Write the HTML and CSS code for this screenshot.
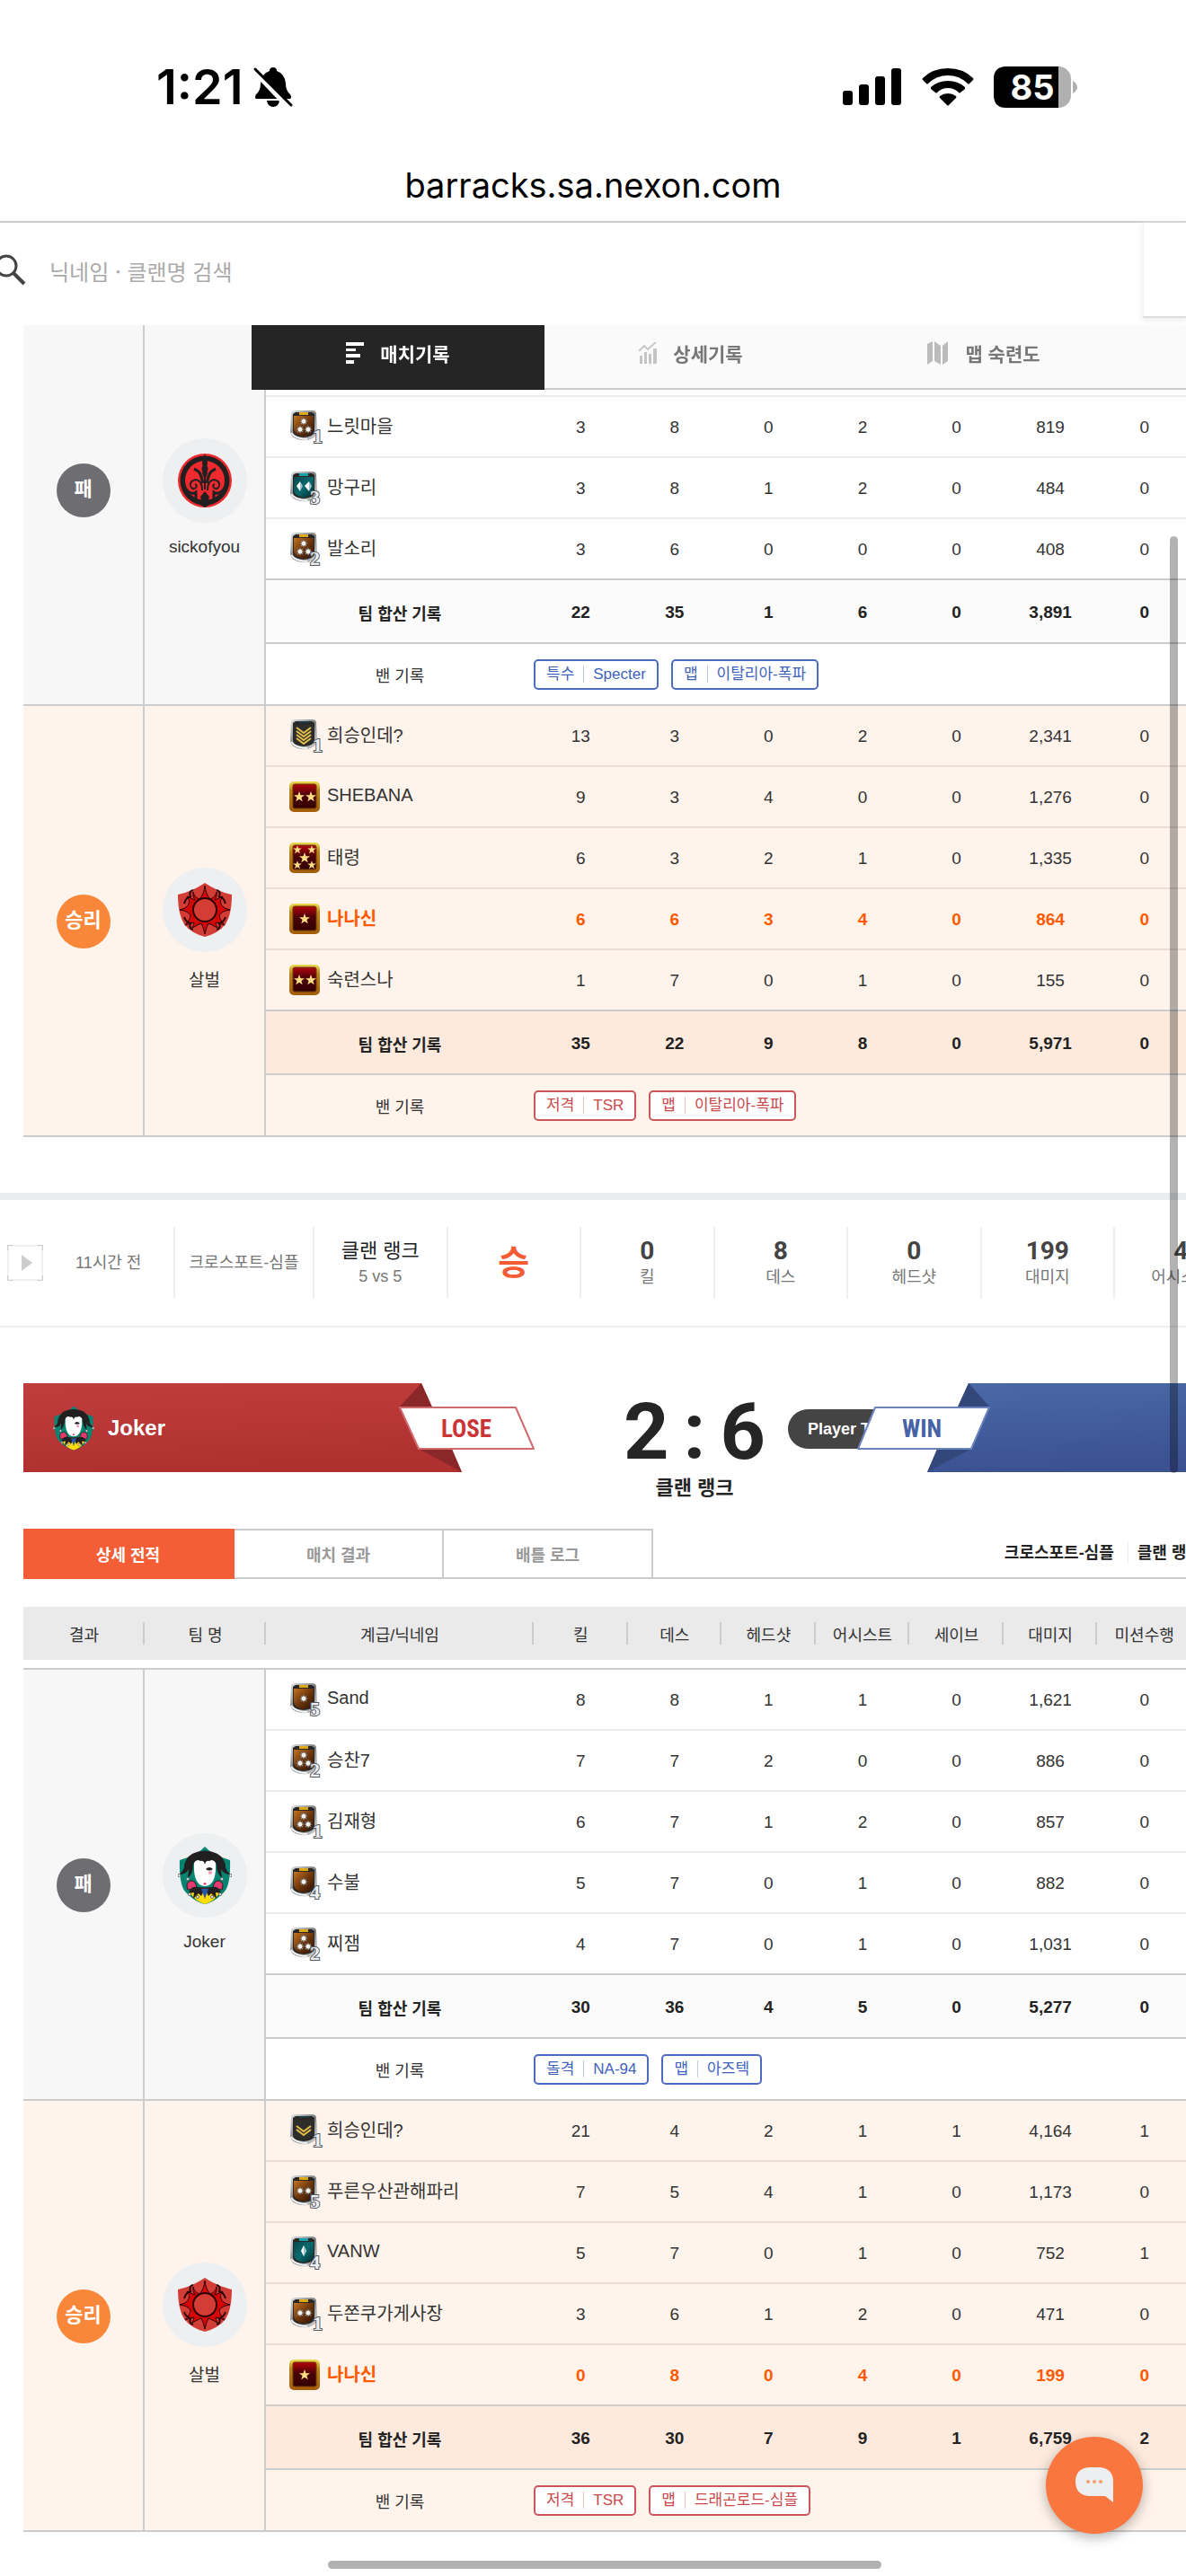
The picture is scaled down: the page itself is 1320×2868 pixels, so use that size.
FILE: index.html
```html
<!DOCTYPE html>
<html lang="ko">
<head>
  <meta charset="UTF-8">
  <meta name="viewport" content="width=device-width">
  <title>barracks.sa.nexon.com</title>
  <link rel="stylesheet" href="styles.css">
</head>
<body>
  <!-- shared icons -->
  <svg class="defs" width="0" height="0" aria-hidden="true">
    <defs>
      <linearGradient id="g-brown" x1="0" y1="0" x2="1" y2="1"><stop offset="0" stop-color="#c47420"/><stop offset=".5" stop-color="#6e360c"/><stop offset="1" stop-color="#2c1003"/></linearGradient>
      <linearGradient id="g-teal" x1="0" y1="0" x2="1" y2="1"><stop offset="0" stop-color="#07484c"/><stop offset=".5" stop-color="#0b6b6e"/><stop offset="1" stop-color="#032c30"/></linearGradient>
      <linearGradient id="g-metal" x1="0" y1="0" x2="1" y2="1"><stop offset="0" stop-color="#e2e4e6"/><stop offset=".5" stop-color="#7a7f82"/><stop offset="1" stop-color="#d8dcde"/></linearGradient>
      <linearGradient id="g-gold" x1="0" y1="0" x2="0" y2="1"><stop offset="0" stop-color="#efdc52"/><stop offset=".3" stop-color="#b98320"/><stop offset="1" stop-color="#a35c08"/></linearGradient>
      <linearGradient id="g-red" x1="0" y1="0" x2="0" y2="1"><stop offset="0" stop-color="#b4040c"/><stop offset=".45" stop-color="#4a0206"/><stop offset="1" stop-color="#340104"/></linearGradient>
      <linearGradient id="g-ribred" x1="0" y1="0" x2=".2" y2="1"><stop offset="0" stop-color="#c03d3d"/><stop offset="1" stop-color="#b03030"/></linearGradient>
      <linearGradient id="g-ribblue" x1="0" y1="0" x2=".2" y2="1"><stop offset="0" stop-color="#4a69a7"/><stop offset="1" stop-color="#3b5192"/></linearGradient>
      <path id="star" d="M0-6 1.500-1.800 6-1.800 2.400 1 3.700 5.200 0 2.700-3.700 5.200-2.400 1-6-1.800-1.500-1.800Z"/>
      <path id="burst" d="M0-4.500 1-2 3.200-3.200 2.200-.8 4.500 0 2.200.9 3.400 3.600 1 2.200 0 4.600-1 2.200-3.400 3.600-2.200.9-4.500 0-2.200-.8-3.200-3.200-1-2Z" fill="#f1f1ee" stroke="#4f4a44" stroke-width=".5"/>
      <g id="frame">
        <path d="M2 3Q3 0 7 0H25Q29 0 30 3L31 25Q29 31 21 33Q15 34 9 32Q3 30 1 25Z" fill="url(#g-metal)"/>
        <path d="M4 4 7 2H25L28 4V23Q28 29 16 30Q4 29 4 23Z" fill="#2b2724"/>
        <path d="M2 25Q7 32 20 32" fill="none" stroke="#f2f4f5" stroke-width="2"/>
      </g>
      <g id="brown"><use href="#frame"/><path d="M5 6H27V21Q26 27 16 29Q6 27 5 21Z" fill="url(#g-brown)"/><path d="M11 2H21V5H11Z" fill="#dda814"/></g>
      <g id="teal"><use href="#frame"/><path d="M5 6H27V21Q26 27 16 29Q6 27 5 21Z" fill="url(#g-teal)"/><path d="M11 2H21V5H11Z" fill="#12a3ab"/></g>
      <g id="black"><use href="#frame"/><path d="M5 6H27V21Q26 27 16 29Q6 27 5 21Z" fill="#2d2d2c"/><path d="M11 2H21V4H11Z" fill="#1b3c44"/></g>
      <symbol id="r-b1" viewBox="0 0 36 38"><use href="#brown"/><use href="#burst" x="16" y="17"/></symbol>
      <symbol id="r-b2" viewBox="0 0 36 38"><use href="#brown"/><use href="#burst" x="12" y="17"/><use href="#burst" x="21" y="17"/></symbol>
      <symbol id="r-b3" viewBox="0 0 36 38"><use href="#brown"/><use href="#burst" x="16" y="12"/><use href="#burst" x="12" y="21"/><use href="#burst" x="21" y="21"/></symbol>
      <symbol id="r-t1" viewBox="0 0 36 38"><use href="#teal"/><path d="M16 10 19 16 16 22 13 16Z" fill="#fff"/><path d="M16 10 19 16 16 22Z" fill="#9fc3cb"/></symbol>
      <symbol id="r-t2" viewBox="0 0 36 38"><use href="#teal"/><path d="M12 11V22L8 16ZM22 11V22L17 16Z" fill="#fff"/><path d="M12 11 15 16 12 22ZM22 11 25 16 22 22Z" fill="#9fc3cb"/></symbol>
      <symbol id="r-k2" viewBox="0 0 36 38"><use href="#black"/><path d="M8 13 16 19 24 13M8 17 16 23 24 17" fill="none" stroke="#e5c04a" stroke-width="2"/></symbol>
      <symbol id="r-k3" viewBox="0 0 36 38"><use href="#black"/><path d="M8 9 16 15 24 9M8 13 16 19 24 13M8 17 16 23 24 17M8 21 16 27 24 21" fill="none" stroke="#e5c04a" stroke-width="2"/></symbol>
      <g id="plate"><rect x="0" y="1" width="34" height="34" rx="5" fill="url(#g-gold)"/><rect x="4" y="4" width="26" height="27" rx="2" fill="url(#g-red)" stroke="#6b3a06"/></g>
      <symbol id="r-s1" viewBox="0 0 36 38"><use href="#plate"/><use href="#star" x="17" y="18" fill="#ffdf84"/></symbol>
      <symbol id="r-s2" viewBox="0 0 36 38"><use href="#plate"/><use href="#star" x="11" y="18" fill="#ffdf84"/><use href="#star" x="24" y="18" fill="#ffdf84"/></symbol>
      <symbol id="r-s5" viewBox="0 0 36 38"><use href="#plate"/><g fill="#ffdf84"><use href="#star" transform="translate(9 9) scale(.8)"/><use href="#star" transform="translate(25 9) scale(.8)"/><use href="#star" transform="translate(9 26) scale(.8)"/><use href="#star" transform="translate(25 26) scale(.8)"/><use href="#star" x="17" y="18"/></g></symbol>
      <symbol id="logo-sick" viewBox="0 0 60 60">
        <circle cx="30" cy="30" r="30" fill="#ee2a2e"/><circle cx="30" cy="30" r="27.500" fill="#221f20"/><circle cx="30" cy="30" r="22" fill="#ee2a2e"/>
        <path d="M30 0 33 10 32 18 33 22 31 27V40H29V27L27 22 28 18 27 10ZM30 42 35 48 34 52 37 56 30 60 23 56 26 52 25 48Z" fill="#221f20"/>
        <path d="M18 17Q25 20 26 26L28 33M42 17Q35 20 34 26L32 33" fill="none" stroke="#221f20" stroke-width="3"/>
        <path d="M27 41Q27 30 20 29 13 30 14 36 16 41 20 38 22 35 19 34M33 41Q33 30 40 29 47 30 46 36 44 41 40 38 38 35 41 34" fill="none" stroke="#221f20" stroke-width="2"/>
        <path d="M8 38Q14 47 20 43L20 50M52 38Q46 47 40 43L40 50" fill="none" stroke="#221f20" stroke-width="3"/>
        <circle cx="30" cy="17" r="3.500" fill="#221f20"/>
      </symbol>
      <symbol id="logo-sun" viewBox="0 0 60 60">
        <path d="M30 0Q45 10 60 13Q60 35 53 46Q45 56 30 60Q15 56 7 46Q0 35 0 13Q15 10 30 0Z" fill="#d43c36"/>
        <g fill="#d50608" stroke="#2b0504" stroke-width="1">
          <path d="M30 3Q31 13 36 18Q42 16 43 10Q44 15 41 19L50 15Q46 19 48 24Q51 29 58 30Q49 31 46 36Q46 40 52 47Q46 45 42 44Q42 46 44 50Q37 46 34 45Q32 48 30 57Q28 48 26 45Q23 46 16 50Q18 46 18 44Q14 45 8 47Q14 40 14 36Q11 31 2 30Q9 29 12 24Q14 19 10 15L19 19Q16 15 17 10Q18 16 24 18Q29 13 30 3Z"/>
          <path d="M7 23Q9 16 14 15Q12 9 17 8M53 23Q51 16 46 15Q48 9 43 8M7 38Q9 44 14 45Q12 51 17 52M53 38Q51 44 46 45Q48 51 43 52" fill="none" stroke-width="2"/>
        </g>
        <circle cx="30" cy="30" r="13" fill="#d43c36" stroke="#2b0504" stroke-width="2"/>
      </symbol>
      <symbol id="logo-joker" viewBox="0 0 60 64">
        <path d="M30 0Q38 9 58 15Q59 45 50 52Q40 62 30 64Q20 62 10 52Q1 45 2 15Q22 9 30 0Z" fill="#058471"/>
        <path d="M13 50Q22 44 30 47Q38 44 47 50Q41 61 30 64Q19 61 13 50Z" fill="#ffdc05"/>
        <path d="M11 48Q8 40 14 38Q20 37 21 46L30 46 39 46Q40 37 46 38Q52 40 49 48L42 47H18Z" fill="#e4396c" stroke="#221f20"/>
        <path d="M12 52Q14 43 22 45L30 47 38 45Q46 43 48 52L42 51 43 58 37 52 34 55 30 47 26 55 23 52 17 58 18 51Z" fill="#221f20"/>
        <path d="M26 47H34L30 58Z" fill="#2955a5"/>
        <path d="M18 18Q18 14 30 15Q42 14 42 18Q43 36 36 42Q30 46 24 42Q17 36 18 18Z" fill="#fff"/>
        <path d="M1 31Q8 26 7 20Q11 8 21 6Q30 3 39 6Q49 8 53 20Q52 26 59 31Q51 31 48 25L49 35Q43 30 43 20Q40 13 35 16Q31 15 30 20Q29 15 25 16Q20 13 17 20Q17 30 11 35L12 25Q9 31 1 31Z" fill="#221f20"/>
        <path d="M31 25Q35 21 39 25Q35 28 31 25Z" fill="#221f20"/><circle cx="36" cy="29" r="2" fill="#f69bb5"/><path d="M28 41 30 40 32 41 30 43Z" fill="#e4396c"/>
        <g fill="#fff" stroke="#666"><circle cx="1.500" cy="32" r="1.500"/><circle cx="58.500" cy="32" r="1.500"/><circle cx="11" cy="36" r="1.500"/><circle cx="49" cy="36" r="1.500"/><circle cx="13" cy="53" r="1.500"/><circle cx="47" cy="53" r="1.500"/><circle cx="22" cy="56" r="1.500"/><circle cx="38" cy="56" r="1.500"/></g>
      </symbol>
    </defs>
  </svg>

  <header class="top">
    <div class="status-bar">
      <div class="status-left">
        <span class="clock">1:21</span>
        <svg width="46" height="46" viewBox="0 0 46 46">
          <path d="M23 1Q27 1 27 5Q36 8 37 19Q37 27 42 31Q44 35 42 36H4Q2 35 4 31Q9 27 9 19Q10 8 19 5Q19 1 23 1Z"/>
          <path d="M16 38H30Q29 45 23 45Q17 45 16 38Z"/>
          <path d="M1 4 40 45" stroke="#fff" stroke-width="6"/>
          <path d="M3 3 43 43" stroke="#000" stroke-width="3" stroke-linecap="round"/>
        </svg>
      </div>
      <div class="status-right">
        <svg width="66" height="42" viewBox="0 0 66 42"><rect x="0" y="25" width="11" height="16" rx="3"/><rect x="18" y="18" width="11" height="23" rx="3"/><rect x="36" y="9" width="11" height="32" rx="3"/><rect x="54" y="0" width="11" height="41" rx="3"/></svg>
        <svg width="58" height="42" viewBox="0 0 58 42"><path d="M29 0Q46 0 57 11Q58 12 57 13L53 17Q52 18 51 17Q42 8 29 8Q16 8 7 17Q6 18 5 17L1 13Q0 12 1 11Q12 0 29 0Z"/><path d="M29 14Q40 14 48 21Q48 22 48 23L43 27Q42 28 41 27Q36 22 29 22Q22 22 17 27Q16 28 15 27L10 23Q10 22 10 21Q18 14 29 14Z"/><path d="M29 28Q34 28 38 31Q39 32 38 33L30 41Q29 42 28 41L20 33Q19 32 20 31Q24 28 29 28Z"/></svg>
        <svg width="94" height="46" viewBox="0 0 94 46"><rect x="0" y="0" width="86" height="46" rx="14" fill="#b0b0b0"/><path d="M14 0H72V46H14Q0 46 0 32V14Q0 0 14 0Z"/><path d="M88 16Q93 19 93 23Q93 27 88 30Z" fill="#b0b0b0"/><text x="43" y="37" class="battery-num">85</text></svg>
      </div>
    </div>
    <div class="address">barracks.sa.nexon.com</div>
    <div class="search-row">
      <div class="search">
        <svg width="36" height="36" viewBox="0 0 36 36"><circle cx="14" cy="13" r="11" fill="none" stroke="#444" stroke-width="3"/><path d="M22 21 34 33" stroke="#444" stroke-width="4"/></svg>
        <input type="text" class="search-input" placeholder="닉네임 · 클랜명 검색" aria-label="닉네임 · 클랜명 검색">
      </div>
      <div class="search-side"></div>
    </div>
    <nav class="main-tabs">
      <a href="#" class="on"><svg width="20" height="24" viewBox="0 0 20 24"><path d="M0 0H20V4H0ZM0 7H11V10H0ZM0 13H16V17H0ZM0 20H9V24H0Z" fill="#fff"/></svg>매치기록</a>
      <a href="#"><svg width="20" height="24" viewBox="0 0 20 24"><path d="M1 24V15H4V24ZM6 24V11H9V24ZM11 24V13H14V24ZM16 24V7H20V24Z" fill="#c4c4c4"/><path d="M0 10 6 4 10 8 19 0" fill="none" stroke="#c8c8c8" stroke-width="2"/></svg>상세기록</a>
      <a href="#"><svg width="24" height="26" viewBox="0 0 24 26"><path d="M0 3 6 0V22L0 26ZM8 0 15 5V26L8 22ZM17 5 23 0V22L17 26Z" fill="#bbb"/></svg>맵 숙련도</a>
      <span class="tabs-rest"></span>
    </nav>
  </header>

  <main>
    <table class="record">
      <colgroup><col class="c-result"><col class="c-team"><col class="c-nick"><col span="7"></colgroup>
      <tbody class="lose">
        <tr class="scrolled"><td rowspan="6" class="side"><span class="badge">패</span></td><td rowspan="6" class="side team"><span class="logo"><svg width="60" height="60"><use href="#logo-sick"/></svg></span>sickofyou</td><td colspan="8"></td></tr>
        <tr><td class="nick"><div><svg class="rank"><use href="#r-b3"/><text x="26" y="36">1</text></svg>느릿마을</div></td><td>3</td><td>8</td><td>0</td><td>2</td><td>0</td><td>819</td><td>0</td></tr>
        <tr><td class="nick"><div><svg class="rank"><use href="#r-t2"/><text x="23" y="36">3</text></svg>망구리</div></td><td>3</td><td>8</td><td>1</td><td>2</td><td>0</td><td>484</td><td>0</td></tr>
        <tr><td class="nick"><div><svg class="rank"><use href="#r-b3"/><text x="23" y="36">2</text></svg>발소리</div></td><td>3</td><td>6</td><td>0</td><td>0</td><td>0</td><td>408</td><td>0</td></tr>
        <tr class="total"><td>팀 합산 기록</td><td>22</td><td>35</td><td>1</td><td>6</td><td>0</td><td>3,891</td><td>0</td></tr>
        <tr class="ban"><td>밴 기록</td><td colspan="7"><div><span class="pill"><b>특수</b>Specter</span><span class="pill"><b>맵</b>이탈리아-폭파</span></div></td></tr>
      </tbody>
      <tbody class="win">
        <tr><td rowspan="7" class="side"><span class="badge">승리</span></td><td rowspan="7" class="side team"><span class="logo"><svg width="60" height="60"><use href="#logo-sun"/></svg></span>살벌</td><td class="nick"><div><svg class="rank"><use href="#r-k3"/><text x="26" y="36">1</text></svg>희승인데?</div></td><td>13</td><td>3</td><td>0</td><td>2</td><td>0</td><td>2,341</td><td>0</td></tr>
        <tr><td class="nick"><div><svg class="rank"><use href="#r-s2"/></svg>SHEBANA</div></td><td>9</td><td>3</td><td>4</td><td>0</td><td>0</td><td>1,276</td><td>0</td></tr>
        <tr><td class="nick"><div><svg class="rank"><use href="#r-s5"/></svg>태령</div></td><td>6</td><td>3</td><td>2</td><td>1</td><td>0</td><td>1,335</td><td>0</td></tr>
        <tr class="me"><td class="nick"><div><svg class="rank"><use href="#r-s1"/></svg>나나신</div></td><td>6</td><td>6</td><td>3</td><td>4</td><td>0</td><td>864</td><td>0</td></tr>
        <tr><td class="nick"><div><svg class="rank"><use href="#r-s2"/></svg>숙련스나</div></td><td>1</td><td>7</td><td>0</td><td>1</td><td>0</td><td>155</td><td>0</td></tr>
        <tr class="total"><td>팀 합산 기록</td><td>35</td><td>22</td><td>9</td><td>8</td><td>0</td><td>5,971</td><td>0</td></tr>
        <tr class="ban"><td>밴 기록</td><td colspan="7"><div><span class="pill"><b>저격</b>TSR</span><span class="pill"><b>맵</b>이탈리아-폭파</span></div></td></tr>
      </tbody>
    </table>

    <section class="summary">
      <div class="when"><button type="button" class="play" aria-label="재생"><svg width="40" height="40" viewBox="0 0 40 40"><rect x="1" y="1" width="38" height="38" fill="none" stroke="#f0f0f0" stroke-width="2"/><path d="M0 6V0H6M34 0H40V6M40 34V40H34M6 40H0V34" fill="none" stroke="#ccc" stroke-width="2"/><path d="M16 11 28 20 16 29Z" fill="#ccc"/></svg></button><span>11시간 전</span></div>
      <div class="small">크로스포트-심플</div>
      <div><strong class="type">클랜 랭크</strong><span>5 vs 5</span></div>
      <div class="result">승</div>
      <div><strong>0</strong><span>킬</span></div>
      <div><strong>8</strong><span>데스</span></div>
      <div><strong>0</strong><span>헤드샷</span></div>
      <div><strong>199</strong><span>대미지</span></div>
      <div><strong>4</strong><span>어시스트</span></div>
    </section>

    <section class="match">
      <div class="ribbon left">
        <svg class="ribbon-bg" width="570" height="99" viewBox="0 0 570 99">
          <path d="M0 0H443L488 99H0Z" fill="url(#g-ribred)"/>
          <path d="M443 0 455 27H418ZM440 73H477L488 99Z" fill="#8a2728"/>
          <path d="M419 27H548L568 73H440Z" fill="#fff" stroke="#cf6a6e" stroke-width="2" stroke-linejoin="round"/>
          <text x="493" y="60" class="flag" fill="#cb3538">LOSE</text>
        </svg>
        <svg class="ribbon-logo" width="46" height="50"><use href="#logo-joker"/></svg>
        <span class="ribbon-name">Joker</span>
      </div>
      <div class="score">
        <div class="score-num"><span>2</span><span>:</span><span>6</span></div>
        <div class="score-label">클랜 랭크</div>
      </div>
      <div class="tag">Player T</div>
      <div class="ribbon right">
        <svg class="ribbon-bg" width="500" height="99" viewBox="0 0 500 99">
          <path d="M124 0H500V99H78Z" fill="url(#g-ribblue)"/>
          <path d="M124 0 148 27H112ZM89 73H127L78 99Z" fill="#34477a"/>
          <path d="M20 27H147L127 73H1Z" fill="#fff" stroke="#6b82bd" stroke-width="2" stroke-linejoin="round"/>
          <text x="72" y="60" class="flag" fill="#4763a8">WIN</text>
        </svg>
      </div>
    </section>

    <div class="sub-tabs">
      <button type="button" class="on">상세 전적</button>
      <button type="button">매치 결과</button>
      <button type="button">배틀 로그</button>
      <p class="info"><span>크로스포트-심플</span><span>클랜 랭크</span></p>
    </div>

    <table class="record">
      <colgroup><col class="c-result"><col class="c-team"><col class="c-nick"><col span="7"></colgroup>
      <thead>
        <tr><th>결과</th><th>팀 명</th><th>계급/닉네임</th><th>킬</th><th>데스</th><th>헤드샷</th><th>어시스트</th><th>세이브</th><th>대미지</th><th>미션수행</th></tr>
        <tr class="gap"><td colspan="10"></td></tr>
      </thead>
      <tbody class="lose">
        <tr><td rowspan="7" class="side"><span class="badge">패</span></td><td rowspan="7" class="side team"><span class="logo"><svg width="60" height="64"><use href="#logo-joker"/></svg></span>Joker</td><td class="nick"><div><svg class="rank"><use href="#r-b1"/><text x="23" y="36">5</text></svg>Sand</div></td><td>8</td><td>8</td><td>1</td><td>1</td><td>0</td><td>1,621</td><td>0</td></tr>
        <tr><td class="nick"><div><svg class="rank"><use href="#r-b3"/><text x="23" y="36">2</text></svg>승찬7</div></td><td>7</td><td>7</td><td>2</td><td>0</td><td>0</td><td>886</td><td>0</td></tr>
        <tr><td class="nick"><div><svg class="rank"><use href="#r-b3"/><text x="26" y="36">1</text></svg>김재형</div></td><td>6</td><td>7</td><td>1</td><td>2</td><td>0</td><td>857</td><td>0</td></tr>
        <tr><td class="nick"><div><svg class="rank"><use href="#r-b1"/><text x="23" y="36">4</text></svg>수불</div></td><td>5</td><td>7</td><td>0</td><td>1</td><td>0</td><td>882</td><td>0</td></tr>
        <tr><td class="nick"><div><svg class="rank"><use href="#r-b3"/><text x="23" y="36">2</text></svg>찌잼</div></td><td>4</td><td>7</td><td>0</td><td>1</td><td>0</td><td>1,031</td><td>0</td></tr>
        <tr class="total"><td>팀 합산 기록</td><td>30</td><td>36</td><td>4</td><td>5</td><td>0</td><td>5,277</td><td>0</td></tr>
        <tr class="ban"><td>밴 기록</td><td colspan="7"><div><span class="pill"><b>돌격</b>NA-94</span><span class="pill"><b>맵</b>아즈텍</span></div></td></tr>
      </tbody>
      <tbody class="win">
        <tr><td rowspan="7" class="side"><span class="badge">승리</span></td><td rowspan="7" class="side team"><span class="logo"><svg width="60" height="60"><use href="#logo-sun"/></svg></span>살벌</td><td class="nick"><div><svg class="rank"><use href="#r-k2"/><text x="26" y="36">1</text></svg>희승인데?</div></td><td>21</td><td>4</td><td>2</td><td>1</td><td>1</td><td>4,164</td><td>1</td></tr>
        <tr><td class="nick"><div><svg class="rank"><use href="#r-b2"/><text x="23" y="36">5</text></svg>푸른우산관해파리</div></td><td>7</td><td>5</td><td>4</td><td>1</td><td>0</td><td>1,173</td><td>0</td></tr>
        <tr><td class="nick"><div><svg class="rank"><use href="#r-t1"/><text x="23" y="36">4</text></svg>VANW</div></td><td>5</td><td>7</td><td>0</td><td>1</td><td>0</td><td>752</td><td>1</td></tr>
        <tr><td class="nick"><div><svg class="rank"><use href="#r-b2"/><text x="26" y="36">1</text></svg>두쫀쿠가게사장</div></td><td>3</td><td>6</td><td>1</td><td>2</td><td>0</td><td>471</td><td>0</td></tr>
        <tr class="me"><td class="nick"><div><svg class="rank"><use href="#r-s1"/></svg>나나신</div></td><td>0</td><td>8</td><td>0</td><td>4</td><td>0</td><td>199</td><td>0</td></tr>
        <tr class="total"><td>팀 합산 기록</td><td>36</td><td>30</td><td>7</td><td>9</td><td>1</td><td>6,759</td><td>2</td></tr>
        <tr class="ban"><td>밴 기록</td><td colspan="7"><div><span class="pill"><b>저격</b>TSR</span><span class="pill"><b>맵</b>드래곤로드-심플</span></div></td></tr>
      </tbody>
    </table>
  </main>

  <button type="button" class="chat" aria-label="채팅">
    <svg width="42" height="40" viewBox="0 0 42 40"><path d="M14 0H28Q42 2 42 16V39L33 32H14Q0 30 0 16Q0 2 14 0Z" fill="#edeef0"/><g fill="#f79a70"><circle cx="14" cy="16" r="2"/><circle cx="21" cy="16" r="2"/><circle cx="28" cy="16" r="2"/></g></svg>
  </button>
  <div class="bar-y"></div>
  <div class="bar-x"></div>
</body>
</html>
```
FILE: styles.css
```css
* {
  box-sizing: border-box;
}

body {
  margin: 0;
  background: #fff;
  color: #333;
  font-family: "Liberation Sans", "Noto Sans CJK KR", sans-serif;
  font-size: 19px;
  overflow-x: hidden;
}

svg {
  flex-shrink: 0;
}

a {
  color: inherit;
  text-decoration: none;
}

button {
  font-family: inherit;
  padding: 0;
  cursor: pointer;
}

.defs {
  position: absolute;
}

/* fixed top */
.top {
  position: fixed;
  top: 0;
  left: 0;
  right: 0;
  z-index: 10;
  overflow: hidden;
}

.status-bar {
  display: flex;
  justify-content: space-between;
  align-items: center;
  background: #fff;
  padding: 70px 120px 0 174px;
  height: 124px;
  color: #000;
}

.status-left,
.status-right {
  display: flex;
  align-items: center;
}

.status-left {
  gap: 10px;
}

.status-right {
  gap: 22px;
}

.clock {
  font: 600 54px/54px Inter, sans-serif;
}

.battery-num {
  font: 700 38px Inter, sans-serif;
  fill: #fff;
  text-anchor: middle;
}

.address {
  height: 124px;
  padding-top: 58px;
  background: #fff;
  border-bottom: 2px solid #ccc;
  color: #000;
  font: 400 38px/48px Inter, sans-serif;
  text-align: center;
}

.search-row {
  display: flex;
  align-items: flex-start;
}

.search {
  flex: 1;
  display: flex;
  align-items: center;
  gap: 26px;
  height: 114px;
  padding-bottom: 8px;
  background: #fff;
}

.search svg {
  margin-left: -7px;
}

.search-input {
  flex: 1;
  height: 48px;
  padding: 0;
  border: 0;
  outline: 0;
  background: none;
  font: 400 24px "Noto Sans CJK KR", sans-serif;
}

.search-input::placeholder {
  color: #aaa;
}

.search-side {
  width: 48px;
  height: 106px;
  background: #fff;
  border-left: 1px solid #f3f3f3;
  border-bottom: 2px solid #ddd;
  box-shadow: 0 2px 7px 1px #eee;
}

.main-tabs {
  display: flex;
  height: 72px;
  margin-left: 280px;
  background: #fafafa;
  color: #777;
  font: 700 21px "Noto Sans CJK KR", sans-serif;
}

.main-tabs a {
  display: flex;
  align-items: center;
  justify-content: center;
  gap: 18px;
  width: 326px;
  padding-bottom: 8px;
  border-bottom: 2px solid #ccc;
}

.main-tabs .on {
  background: #252525;
  border-color: #252525;
  color: #fff;
}

.tabs-rest {
  flex: 1;
  border-bottom: 2px solid #ccc;
}

/* the first record is scrolled under the fixed top */
main {
  padding: 306px 0 49px;
}

/* record table */
.record {
  width: calc(100% - 20px);
  margin-left: 26px;
  border-spacing: 0;
  table-layout: fixed;
  text-align: center;
}

.c-result {
  width: 135px;
}

.c-team {
  width: 135px;
}

.c-nick {
  width: 298px;
}

.record th {
  height: 59px;
  padding: 0;
  background: linear-gradient(#ccc, #ccc) right center / 2px 25px no-repeat #eaeaea;
  font-size: 18px;
  font-weight: 400;
}

.record .gap td {
  height: 11px;
}

.record td {
  height: 68px;
  padding: 2px 0 0;
  border-bottom: 2px solid #ececec;
}

.record .scrolled td {
  height: 136px;
}

.record .side {
  background: #f7f7f7;
  border-right: 2px solid #ccc;
}

.record .side,
.record .gap td,
.record .ban td,
.record .total td,
.record tr:nth-last-child(3) td {
  border-bottom-color: #ccc;
}

.record .team {
  padding-top: 18px;
}

.logo {
  display: flex;
  align-items: center;
  justify-content: center;
  width: 94px;
  height: 94px;
  margin: 0 auto 16px;
  border-radius: 50%;
  background: #edeff1;
}

.badge {
  display: block;
  width: 60px;
  height: 60px;
  margin: 0 auto;
  border-radius: 50%;
  background: #6e6d72;
  color: #fff;
  font-size: 22px;
  font-weight: 700;
  line-height: 58px;
}

.nick div {
  display: flex;
  align-items: center;
  gap: 6px;
  padding: 0 0 6px 26px;
  font-size: 20px;
  white-space: nowrap;
}

.rank {
  width: 36px;
  height: 38px;
  margin-top: 6px;
  overflow: visible;
}

.rank text {
  font: 700 22px "Liberation Serif", serif;
  fill: #eef1f4;
  stroke: #55595d;
  stroke-width: 2px;
  paint-order: stroke;
}

.record .total td {
  height: 71px;
  background: #fbfbfb;
  font-weight: 700;
}

.record .total td:first-child,
.record .ban td:first-child {
  font-size: 18px;
}

.record .total td {
  color: #222;
}

.record .ban td {
  height: 69px;
  padding: 0;
}

.ban div {
  display: flex;
  gap: 14px;
}

.pill {
  height: 34px;
  padding: 0 12px;
  border: 2px solid #4a6cc0;
  border-radius: 5px;
  background: #fff;
  color: #3f63bb;
  font-size: 17px;
  line-height: 30px;
}

.pill b {
  margin-right: 10px;
  padding-right: 10px;
  border-right: 1px solid #bccae8;
  font-weight: 400;
}

.win td {
  background: #fff4eb;
  border-bottom-color: #eaded6;
}

.record .win .side {
  background: #fff4eb;
}

.record .win .total td {
  background: #fdeadd;
}

.win .badge {
  background: #f9873a;
}

.win .pill {
  border-color: #cb5558;
  color: #c9484c;
}

.win .pill b {
  border-color: #eec2c3;
}

.me td {
  color: #ff5a00;
  font-weight: 700;
}

/* match summary line */
.summary {
  display: grid;
  grid-template-columns: 195px 155px repeat(7, 11.25%);
  margin-top: 62px;
  padding: 30px 0;
  border-top: 8px solid #ebecee;
  border-bottom: 2px solid #efefef;
  overflow: hidden;
  color: #777;
  font-size: 18px;
}

.summary > div {
  display: flex;
  flex-direction: column;
  align-items: center;
  justify-content: center;
  height: 80px;
  border-right: 2px solid #efefef;
  line-height: 26px;
  white-space: nowrap;
}

.summary .when {
  flex-direction: row;
  justify-content: flex-start;
  gap: 36px;
  padding-left: 8px;
}

.summary strong {
  color: #444;
  font: 700 28px/32px Roboto, sans-serif;
}

.summary .type {
  color: #222;
  font: 400 22px/30px "Liberation Sans", "Noto Sans CJK KR", sans-serif;
}

.summary .result {
  color: #f35c35;
  font-size: 38px;
  font-weight: 700;
}

.play {
  display: flex;
  border: 0;
  background: none;
}

/* score board */
.match {
  display: flex;
  align-items: flex-start;
  margin-top: 62px;
  padding-left: 26px;
  overflow: hidden;
}

.ribbon {
  position: relative;
  display: flex;
  align-items: center;
  gap: 15px;
  height: 99px;
}

.ribbon-bg {
  position: absolute;
  top: 0;
  left: 0;
}

.left {
  flex: 0 0 570px;
  padding-left: 33px;
}

.right {
  flex: 1;
  margin-left: -51px;
}

.ribbon-logo,
.ribbon-name {
  position: relative;
}

.ribbon-name {
  color: #fff;
  font-size: 24px;
  font-weight: 700;
}

.flag {
  font: 700 27px "Liberation Sans Narrow", "Roboto Condensed", Roboto, sans-serif;
  text-anchor: middle;
}

.score {
  padding: 22px 27px 0 100px;
  color: #252525;
  text-align: center;
}

.score-num {
  display: flex;
  justify-content: center;
  gap: 16px;
  width: 154px;
  font: 700 88px/64px Roboto, sans-serif;
}

.score-label {
  margin-top: 15px;
  font-size: 22px;
  font-weight: 700;
  line-height: 32px;
}

.tag {
  flex: 0 0 128px;
  height: 44px;
  margin-top: 29px;
  padding-left: 22px;
  border-radius: 22px;
  background: #444;
  color: #fff;
  font-size: 18px;
  font-weight: 700;
  line-height: 44px;
}

.sub-tabs {
  display: flex;
  height: 56px;
  margin: 29px -17px 31px 26px;
  border-bottom: 2px solid #ccc;
}

.sub-tabs button {
  width: 233px;
  height: 56px;
  border: 2px solid #ccc;
  border-left: 0;
  background: #fff;
  color: #999;
  font-size: 18px;
  font-weight: 700;
}

.sub-tabs .on {
  width: 235px;
  border-color: #f35e36;
  background: #f35e36;
  color: #fff;
}

.info {
  display: flex;
  align-items: center;
  gap: 10px;
  margin: 0 0 0 auto;
  color: #222;
  font-size: 18px;
  font-weight: 700;
  line-height: 24px;
}

.info span:first-child {
  padding-right: 15px;
  border-right: 1px solid #eee;
}

/* floating parts */
.chat {
  position: fixed;
  right: 48px;
  bottom: 47px;
  z-index: 11;
  display: flex;
  align-items: center;
  justify-content: center;
  width: 108px;
  height: 108px;
  border: 0;
  border-radius: 50%;
  background: #f9763f;
  box-shadow: 0 4px 14px rgba(0, 0, 0, 0.3);
}

.bar-y {
  position: fixed;
  top: 597px;
  right: 9px;
  z-index: 12;
  width: 9px;
  height: 1043px;
  border-radius: 5px;
  background: rgba(0, 0, 0, 0.3);
}

.bar-x {
  position: fixed;
  bottom: 8px;
  left: 365px;
  z-index: 12;
  width: 616px;
  height: 9px;
  border-radius: 5px;
  background: #b1b1b1;
}
```
